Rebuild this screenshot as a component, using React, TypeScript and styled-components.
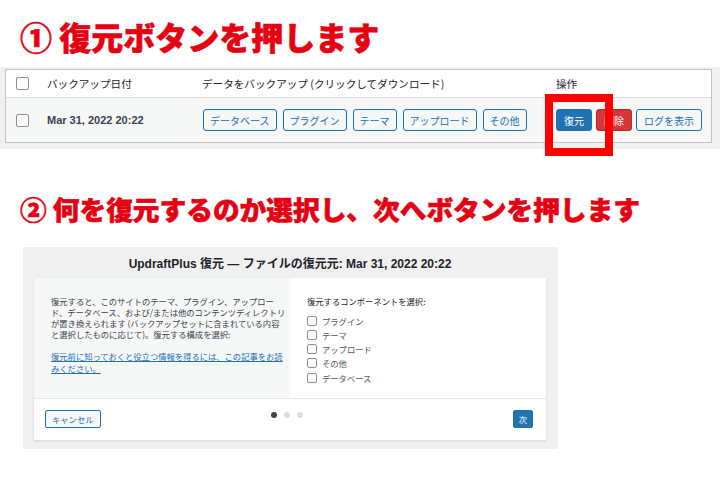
import React from "react";
import styled, { createGlobalStyle } from "styled-components";

const Global = createGlobalStyle`
  html, body { margin: 0; padding: 0; background: #fff; }
  body { font-family: "Liberation Sans", "Noto Sans CJK JP", sans-serif; }
`;

const Page = styled.div`
  width: 720px;
  height: 480px;
  overflow: hidden;
  background: #fff;
  display: flex;
  flex-direction: column;
`;

const StepTitle = styled.h1<{ $size: number; $top: number }>`
  margin: ${(p) => p.$top}px 0 0 20px;
  font-family: "Noto Sans CJK JP", sans-serif;
  font-weight: 900;
  font-size: ${(p) => p.$size}px;
  line-height: ${(p) => p.$size}px;
  color: #e60012;
  -webkit-text-stroke: 0.6px #e60012;
  white-space: nowrap;
`;

const TableStrip = styled.div`
  margin-top: 15px;
  background: #f0f0f1;
  padding: 2px 8px 6px 5px;
`;

const Table = styled.div`
  border: 1px solid #c3c4c7;
  background: #fff;
`;

const Row = styled.div<{ $head?: boolean }>`
  display: grid;
  grid-template-columns: 41px 155px 354px 1fr;
  align-items: center;
  height: ${(p) => (p.$head ? 27 : 44)}px;
  background: ${(p) => (p.$head ? "#fff" : "#f6f7f7")};
  border-bottom: ${(p) => (p.$head ? "1px solid #dcdcde" : "none")};
  font-family: "Noto Sans CJK JP", sans-serif;
  font-size: 10.6px;
  color: #1d2327;
`;

const Cell = styled.div`
  position: relative;
  display: flex;
  align-items: center;
  gap: 6px;
  white-space: nowrap;
`;

const Check = styled.span<{ $size: number }>`
  display: inline-block;
  box-sizing: border-box;
  width: ${(p) => p.$size}px;
  height: ${(p) => p.$size}px;
  border: 1px solid #8c8f94;
  border-radius: 2px;
  background: #fff;
  flex: none;
`;

const CheckCell = styled(Cell)`
  padding-left: 10px;
`;

const DateText = styled.span`
  font-family: "Liberation Sans", sans-serif;
  font-weight: bold;
  font-size: 11px;
  color: #3c434a;
`;

const WpButton = styled.span<{ $variant?: "primary" | "danger" }>`
  display: inline-flex;
  align-items: center;
  box-sizing: border-box;
  height: 22px;
  padding: 0 6px;
  border-radius: 3px;
  font-family: "Noto Sans CJK JP", sans-serif;
  font-size: 10px;
  border: 1px solid ${(p) => (p.$variant === "danger" ? "#b32d2e" : "#2271b1")};
  background: ${(p) =>
    p.$variant === "danger" ? "#d63638" : p.$variant === "primary" ? "#2271b1" : "#f6f7f7"};
  color: ${(p) => (p.$variant ? "#fff" : "#2271b1")};
`;

const DataButtons = styled(Cell)`
  padding-left: 1px;
`;

const ActionCell = styled(Cell)`
  gap: 4px;
  ${WpButton} {
    padding: 0 7px;
  }
`;

const Highlight = styled.div`
  position: absolute;
  left: -11px;
  top: -15px;
  width: 68px;
  height: 62px;
  box-sizing: border-box;
  border: 8px solid #ff0000;
  pointer-events: none;
  z-index: 2;
`;

const Dialog = styled.div`
  margin: 24px 0 0 23px;
  width: 535px;
  box-sizing: border-box;
  background: #f0f0f1;
  padding: 0 12px 9px 11px;
`;

const DialogTitle = styled.div`
  height: 31px;
  display: flex;
  align-items: center;
  justify-content: center;
  font-family: "Liberation Sans", "Noto Sans CJK JP", sans-serif;
  font-weight: bold;
  font-size: 12px;
  color: #1d2327;
  white-space: nowrap;
`;

const Card = styled.div`
  background: #fff;
  box-shadow: 0 1px 2px rgba(0, 0, 0, 0.12);
`;

const Panels = styled.div`
  display: grid;
  grid-template-columns: 256px 256px;
  height: 120px;
`;

const Panel = styled.div<{ $shade?: boolean }>`
  background: ${(p) => (p.$shade ? "#f6f7f7" : "#fff")};
  padding: 18px 17px 0 17px;
  font-family: "Noto Sans CJK JP", sans-serif;
  font-size: 8.3px;
  color: #3c434a;
  white-space: nowrap;
`;

const Para = styled.p`
  margin: 0;
  line-height: 11.2px;
`;

const Link = styled.a`
  display: block;
  margin-top: 9px;
  line-height: 12.5px;
  color: #2271b1;
  text-decoration: underline;
`;

const ChoiceHead = styled.div`
  line-height: 11px;
  color: #1d2327;
  margin-bottom: 7px;
`;

const Choice = styled.label`
  display: flex;
  align-items: center;
  gap: 5px;
  height: 14.2px;
  color: #50575e;
`;

const Footer = styled.div`
  display: grid;
  grid-template-columns: 1fr auto 1fr;
  align-items: center;
  height: 42px;
  border-top: 1px solid #e6e6e8;
  box-sizing: border-box;
  padding: 0 13px 0 11px;
`;

const SmallButton = styled.span<{ $primary?: boolean }>`
  justify-self: ${(p) => (p.$primary ? "end" : "start")};
  display: inline-flex;
  align-items: center;
  box-sizing: border-box;
  height: 18px;
  padding: 0 ${(p) => (p.$primary ? 5 : 6)}px;
  border-radius: 2px;
  border: 1px solid #2271b1;
  background: ${(p) => (p.$primary ? "#2271b1" : "#f6f7f7")};
  color: ${(p) => (p.$primary ? "#fff" : "#2271b1")};
  font-family: "Noto Sans CJK JP", sans-serif;
  font-size: 8.3px;
`;

const Dots = styled.div`
  display: flex;
  gap: 7px;
  margin-right: 4px;
  margin-top: -8px;
`;

const Dot = styled.span<{ $active?: boolean }>`
  width: 6px;
  height: 6px;
  border-radius: 50%;
  background: ${(p) => (p.$active ? "#3c434a" : "#dcdcde")};
`;

const dataButtons = ["データベース", "プラグイン", "テーマ", "アップロード", "その他"];
const choices = ["プラグイン", "テーマ", "アップロード", "その他", "データベース"];

export default function App() {
  return (
    <Page>
      <Global />
      <StepTitle $size={32} $top={20}>
        ① 復元ボタンを押します
      </StepTitle>
      <TableStrip>
        <Table>
          <Row $head>
            <CheckCell>
              <Check $size={13} />
            </CheckCell>
            <Cell>バックアップ日付</Cell>
            <Cell>データをバックアップ (クリックしてダウンロード)</Cell>
            <Cell>操作</Cell>
          </Row>
          <Row>
            <CheckCell>
              <Check $size={13} />
            </CheckCell>
            <Cell>
              <DateText>Mar 31, 2022 20:22</DateText>
            </Cell>
            <DataButtons>
              {dataButtons.map((b) => (
                <WpButton key={b}>{b}</WpButton>
              ))}
            </DataButtons>
            <ActionCell>
              <WpButton $variant="primary">復元</WpButton>
              <WpButton $variant="danger">削除</WpButton>
              <WpButton>ログを表示</WpButton>
              <Highlight />
            </ActionCell>
          </Row>
        </Table>
      </TableStrip>
      <StepTitle $size={26.7} $top={47}>
        ② 何を復元するのか選択し、次へボタンを押します
      </StepTitle>
      <Dialog>
        <DialogTitle>UpdraftPlus 復元 — ファイルの復元元: Mar 31, 2022 20:22</DialogTitle>
        <Card>
          <Panels>
            <Panel $shade>
              <Para>
                復元すると、このサイトのテーマ、プラグイン、アップロー
                <br />
                ド、データベース、および/または他のコンテンツディレクトリ
                <br />
                が置き換えられます (バックアップセットに含まれている内容
                <br />
                と選択したものに応じて)。復元する構成を選択:
              </Para>
              <Link>
                復元前に知っておくと役立つ情報を得るには、この記事をお読
                <br />
                みください。
              </Link>
            </Panel>
            <Panel>
              <ChoiceHead>復元するコンポーネントを選択:</ChoiceHead>
              {choices.map((c) => (
                <Choice key={c}>
                  <Check $size={10} />
                  {c}
                </Choice>
              ))}
            </Panel>
          </Panels>
          <Footer>
            <SmallButton>キャンセル</SmallButton>
            <Dots>
              <Dot $active />
              <Dot />
              <Dot />
            </Dots>
            <SmallButton $primary>次</SmallButton>
          </Footer>
        </Card>
      </Dialog>
    </Page>
  );
}
